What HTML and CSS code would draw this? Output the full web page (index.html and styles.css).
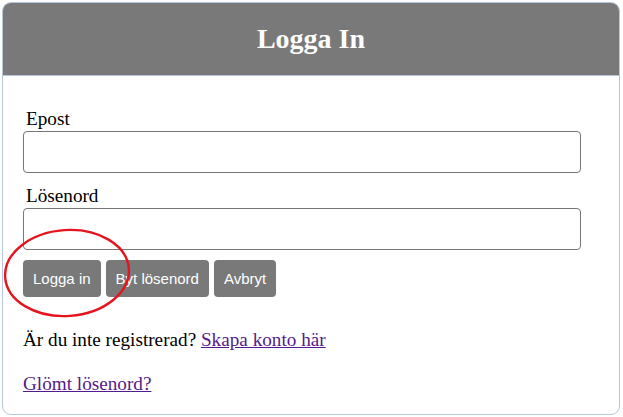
FILE: index.html
```html
<!DOCTYPE html>
<html lang="sv">
<head>
<meta charset="utf-8">
<title>Logga In</title>
<link rel="stylesheet" href="styles.css">
</head>
<body>
<div class="card">
  <div class="card-header"><h2 class="title">Logga In</h2></div>
  <div class="card-body">
    <form class="form">
      <label class="label" for="epost">Epost</label>
      <input class="input" id="epost" type="text">
      <label class="label" for="pw">Lösenord</label>
      <input class="input input-last" id="pw" type="password">
      <div class="buttons">
        <button class="btn" type="button">Logga in</button>
        <button class="btn" type="button">Byt lösenord</button>
        <button class="btn" type="button">Avbryt</button>
      </div>
    </form>
    <p class="text">Är du inte registrerad? <a class="link" href="#">Skapa konto här</a></p>
    <p class="text"><a class="link" href="#">Glömt lösenord?</a></p>
  </div>
</div>
<svg class="annotation" width="623" height="417" viewBox="0 0 623 417">
  <ellipse cx="67" cy="273" rx="62" ry="43" transform="rotate(-4 67 273)" fill="none" stroke="#e5141e" stroke-width="2.4"/>
</svg>
</body>
</html>
```

FILE: styles.css
```css
html, body {
  margin: 0;
  padding: 0;
  background: #ffffff;
}
body {
  font-family: "Liberation Serif", "Times New Roman", serif;
  font-size: 19.2px;
  color: #000;
  position: relative;
  width: 623px;
  height: 417px;
  overflow: hidden;
}
.card {
  margin: 2px 0 0 2px;
  width: 616px;
  height: 411px;
  border: 1px solid #b4c6e0;
  border-radius: 9px;
  overflow: hidden;
  box-sizing: content-box;
}
.card-header {
  background: #797979;
  height: 72px;
  border-bottom: 1px solid #b4c6e0;
  display: flex;
  align-items: center;
  justify-content: center;
}
.title {
  margin: 0;
  color: #ffffff;
  font-size: 28px;
  font-weight: bold;
  line-height: 32px;
}
.card-body {
  padding: 32px 20px 0 20px;
}
.form {
  display: flex;
  flex-direction: column;
  align-items: flex-start;
}
.label {
  display: block;
  padding-left: 3px;
  line-height: 22px;
}
.input {
  width: 558px;
  height: 42px;
  box-sizing: border-box;
  border: 1px solid #767676;
  border-radius: 4px;
  margin: 1px 0 12px 0;
  padding: 0 8px;
  font-size: 16px;
  background: #fff;
}
.input-last {
  margin-bottom: 10px;
}
.buttons {
  display: flex;
  gap: 5px;
}
.btn {
  background: #797979;
  color: #ffffff;
  border: none;
  border-radius: 4px;
  font-family: "Liberation Sans", Arial, sans-serif;
  font-size: 15px;
  line-height: 17px;
  padding: 10px 10px;
  height: 37px;
  white-space: nowrap;
}
.text {
  margin: 32px 0 0 0;
  line-height: 22px;
}
.text + .text {
  margin-top: 22px;
}
.link {
  color: #551a8b;
  text-decoration: underline;
}
.annotation {
  position: absolute;
  left: 0;
  top: 0;
  pointer-events: none;
}
```
